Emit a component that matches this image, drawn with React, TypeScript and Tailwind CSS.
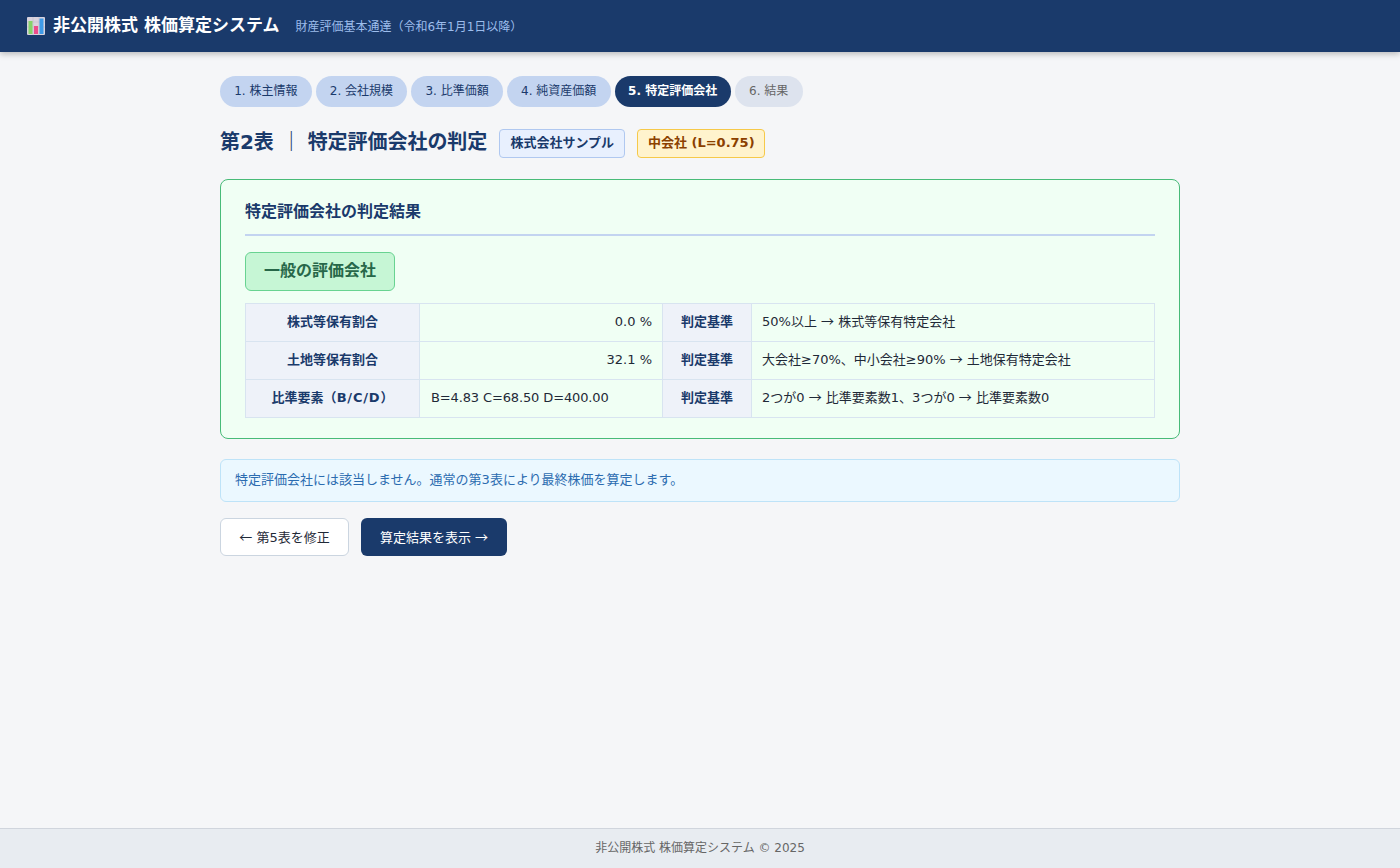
import type { ReactNode } from 'react';

const steps = [
  { label: '1. 株主情報', state: 'done' },
  { label: '2. 会社規模', state: 'done' },
  { label: '3. 比準価額', state: 'done' },
  { label: '4. 純資産価額', state: 'done' },
  { label: '5. 特定評価会社', state: 'active' },
  { label: '6. 結果', state: 'todo' },
];

// the arrow comes from the CJK font, it is wider than the DejaVu one
const Arrow = ({ children }: { children: ReactNode }) => (
  <span className="font-['Noto_Sans_CJK_JP',sans-serif]">{children}</span>
);

const rows: { name: ReactNode; value: string; right: boolean; rule: ReactNode }[] = [
  {
    name: '株式等保有割合',
    value: '0.0 %',
    right: true,
    rule: <>50%以上 <Arrow>→</Arrow> 株式等保有特定会社</>,
  },
  {
    name: '土地等保有割合',
    value: '32.1 %',
    right: true,
    rule: <>大会社≥70%、中小会社≥90% <Arrow>→</Arrow> 土地保有特定会社</>,
  },
  {
    name: <>比準要素（<span className="tracking-[0.8px]">B/C/D</span>）</>,
    value: 'B=4.83 C=68.50 D=400.00',
    right: false,
    rule: <>2つが0 <Arrow>→</Arrow> 比準要素数1、3つが0 <Arrow>→</Arrow> 比準要素数0</>,
  },
];

const ChartIcon = () => (
  <svg width="18" height="18" viewBox="0 0 18 18" className="shrink-0">
    <rect x="0" y="0" width="18" height="18" rx="1" fill="#d9d3de" />
    <path d="M0 5h18M0 10h18M6 0v18M12 0v18" stroke="#c3bcc9" strokeWidth="0.6" />
    <rect x="1.5" y="4" width="4" height="13" fill="#86d36a" />
    <rect x="7" y="9" width="4" height="8" fill="#ee4c8c" />
    <rect x="12.5" y="1.5" width="4" height="15.5" fill="#3f9be8" />
  </svg>
);

const App = () => {
  return (
    <div className="min-h-[868px] flex flex-col bg-[#f5f6f8] text-[#1f2937] font-['DejaVu_Sans','Noto_Sans_CJK_JP',sans-serif]">
      <header className="h-[52px] bg-[#1a3a6b] flex items-center px-[27px] shadow-[0_2px_6px_rgba(0,0,0,0.25)]">
        <ChartIcon />
        <h1 className="ml-2 text-[17px] font-bold text-white">非公開株式 株価算定システム</h1>
        <span className="ml-4 mt-0.5 text-xs text-[#9dbdec]">財産評価基本通達（令和6年1月1日以降）</span>
      </header>

      <main className="flex-1 w-[960px] mx-auto pt-6">
        <nav className="flex gap-1 mb-[22px]">
          {steps.map((step) => (
            <div
              key={step.label}
              className={
                step.state === 'active'
                  ? 'h-[31px] px-[13.5px] pb-0.5 rounded-full flex items-center text-xs font-bold bg-[#1a3a6b] text-white'
                  : step.state === 'done'
                    ? 'h-[31px] px-[14.2px] pb-0.5 rounded-full flex items-center text-xs bg-[#c3d4f0] text-[#1a3a6b]'
                    : 'h-[31px] px-[14.4px] pb-0.5 rounded-full flex items-center text-xs bg-[#dde3ee] text-[#666666]'
              }
            >
              {step.label}
            </div>
          ))}
        </nav>

        <div className="flex items-center gap-3 mb-[21px]">
          <h2 className="self-start text-xl leading-[27px] tracking-[-0.04px] font-bold text-[#1a3a6b]">第2表 <span className="ml-[0.4px] mr-[-0.4px]">｜</span> 特定評価会社の判定</h2>
          <span className="h-[29px] w-[126px] pb-0.5 flex items-center justify-center rounded border border-[#b0c8f0] bg-[#e8f0fe] text-[13px] font-bold text-[#1a3a6b]">株式会社サンプル</span>
          <span className="h-[29px] w-[128px] pb-0.5 flex items-center justify-center rounded border border-[#f6c94a] bg-[#fff3cd] text-[13px] font-bold text-[#8b4000]">中会社 (L=0.75)</span>
        </div>

        <section className="rounded-lg border border-[#48bb78] bg-[#f0fff4] px-6 pt-[22px] pb-5 mb-5">
          <h3 className="text-base leading-5 font-bold text-[#1a3a6b] pb-3 mb-4 border-b-2 border-[#c3d4f0]">特定評価会社の判定結果</h3>
          <div className="inline-flex items-center h-[39px] px-[18px] pb-0.5 rounded-md border border-[#68d391] bg-[#c6f6d5] text-base font-bold text-[#276749] mb-3">一般の評価会社</div>
          <table className="w-[909px] table-fixed border-collapse text-[13px]">
            <colgroup>
              <col className="w-[174px]" />
              <col className="w-[243px]" />
              <col className="w-[89px]" />
              <col className="w-[403px]" />
            </colgroup>
            <tbody>
              {rows.map((row, i) => (
                <tr key={i} className="h-[38px]">
                  <th className="border border-[#d8e4f0] bg-[#eef2f9] pb-0.5 font-bold text-[#1a3a6b] text-center">{row.name}</th>
                  <td className={row.right ? 'border border-[#d8e4f0] px-2.5 pb-0.5 text-right' : 'border border-[#d8e4f0] pl-[11px] pr-2.5 pb-0.5 tracking-[-0.13px]'}>{row.value}</td>
                  <th className="border border-[#d8e4f0] bg-[#eef2f9] pb-0.5 font-bold text-[#1a3a6b] text-center">判定基準</th>
                  <td className="border border-[#d8e4f0] px-2.5 pb-0.5">{row.rule}</td>
                </tr>
              ))}
            </tbody>
          </table>
        </section>

        <div className="h-[43px] flex items-center px-3.5 pb-0.5 rounded-md border border-[#bee3f8] bg-[#ebf8ff] text-[13px] text-[#2b6cb0] mb-4">
          特定評価会社には該当しません。通常の第3表により最終株価を算定します。
        </div>

        <div className="flex gap-3">
          <button className="h-[38px] w-[129px] rounded-md border border-[#cbd5e0] bg-white text-[13px] text-[#1f2937]"><Arrow>←</Arrow> 第5表を修正</button>
          <button className="h-[38px] w-[146px] rounded-md bg-[#1a3a6b] text-[13px] text-white">算定結果を表示 <Arrow>→</Arrow></button>
        </div>
      </main>

      <footer className="h-10 pb-0.5 flex items-center justify-center border-t border-[#d0d5dd] bg-[#e8ecf1] text-xs text-[#666666]">
        非公開株式 株価算定システム © 2025
      </footer>
    </div>
  );
};

export default App;
